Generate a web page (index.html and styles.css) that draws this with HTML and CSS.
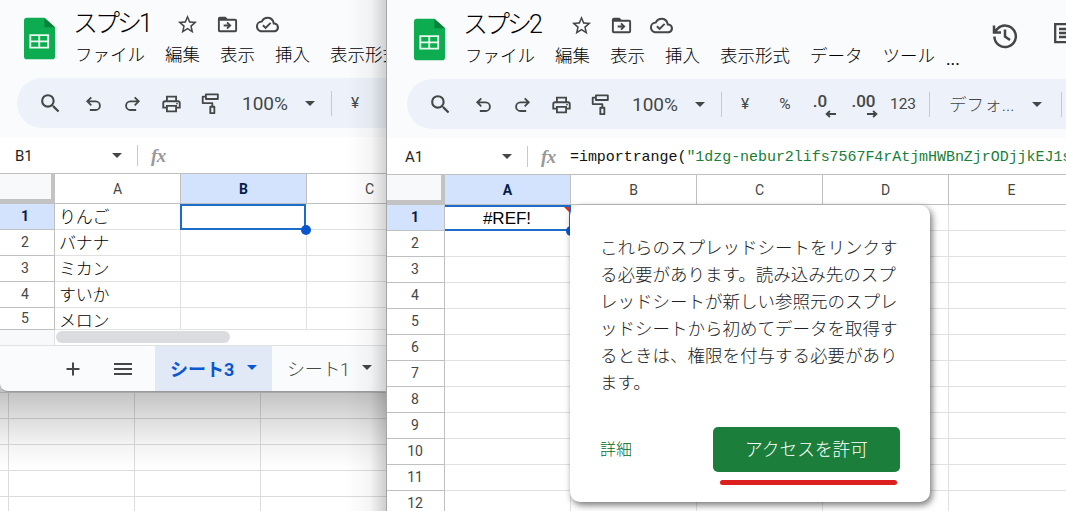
FILE: index.html
```
<!DOCTYPE html>
<html lang="ja">
<head>
  <meta charset="UTF-8">
  <meta name="viewport" content="width=device-width, initial-scale=1.0">
  <title>IMPORTRANGE</title>
  <link rel="stylesheet" href="styles.css">
</head>
<body>
  <!-- icons -->
  <svg class="defs">
    <symbol id="logo" viewBox="0 0 32 43"><path d="M3 0h18l11 10v30a3 3 0 0 1-3 3H3a3 3 0 0 1-3-3V3a3 3 0 0 1 3-3z" fill="#0dac50"/><path d="M21 0l11 10H21z" fill="#08843a"/><path d="M6.500 18h18.500v13H6.500zM6.500 24.500H25M15.750 18v13" fill="none" stroke="#e9f8ee" stroke-width="1.900"/></symbol>
    <symbol id="star" viewBox="0 0 24 24"><path d="M22 9.240l-7.190-.62L12 2 9.190 8.630 2 9.240l5.460 4.730L5.820 21 12 17.270 18.180 21l-1.630-7.030L22 9.240zM12 15.400l-3.760 2.270 1-4.280-3.320-2.880 4.380-.38L12 6.100l1.710 4.040 4.380.38-3.320 2.880 1 4.280L12 15.400z"/></symbol>
    <symbol id="move" viewBox="0 0 24 24"><path d="M20 6h-8l-2-2H4a2 2 0 0 0-2 2v12a2 2 0 0 0 2 2h16a2 2 0 0 0 2-2V8a2 2 0 0 0-2-2zm0 12H4V8h16v10zm-7.800-1l4-4-4-4-1.400 1.400 1.600 1.600H8v2h4.400l-1.600 1.600z"/></symbol>
    <symbol id="cloud" viewBox="0 0 24 24"><path d="M19.350 10.040A7.490 7.490 0 0 0 12 4C9.110 4 6.600 5.640 5.350 8.040A5.990 5.990 0 0 0 0 14c0 3.310 2.690 6 6 6h13c2.760 0 5-2.240 5-5 0-2.640-2.050-4.780-4.650-4.960zM19 18H6a4 4 0 0 1-.430-7.970l1.070-.11.500-.95A5.470 5.470 0 0 1 12 6c2.620 0 4.880 1.860 5.390 4.430l.3 1.500 1.530.11A3 3 0 0 1 19 18zm-9-3.820l-2.090-2.090L6.500 13.500 10 17l6.010-6.010-1.410-1.410z"/></symbol>
    <symbol id="search" viewBox="0 0 24 24"><path d="M15.500 14h-.79l-.28-.27A6.470 6.470 0 0 0 16 9.500 6.500 6.500 0 1 0 9.500 16c1.610 0 3.090-.59 4.230-1.570l.27.28v.79l5 4.990L20.490 19l-4.990-5zm-6 0a4.500 4.500 0 1 1 0-9 4.500 4.500 0 0 1 0 9z"/></symbol>
    <symbol id="undo" viewBox="0 0 24 24"><path d="M8 19.500v-2h6.300a3.700 3.700 0 0 0 0-7.400H7.600l2.700 2.700L8.900 14.200 3.800 9.100 8.900 4l1.400 1.400-2.700 2.700h6.700a5.700 5.700 0 0 1 0 11.400z"/></symbol>
    <symbol id="redo" viewBox="0 0 24 24"><path d="M16 19.500v-2H9.700a3.700 3.700 0 0 1 0-7.400h6.700l-2.700 2.700 1.400 1.400 5.100-5.100L15.100 4l-1.400 1.400 2.700 2.700H9.700a5.700 5.700 0 0 0 0 11.400z"/></symbol>
    <symbol id="print" viewBox="0 0 24 24"><path d="M19 8h-1V3H6v5H5a3 3 0 0 0-3 3v6h4v4h12v-4h4v-6a3 3 0 0 0-3-3zM8 5h8v3H8zm8 14H8v-4h8zm2-4v-2H6v2H4v-4a1 1 0 0 1 1-1h14a1 1 0 0 1 1 1v4z"/><circle cx="18" cy="11.500" r="1"/></symbol>
    <symbol id="paint" viewBox="0 0 20 24"><path d="M5 1.500h13v5H5zM5 4H1.500v7H12v4M9.800 15h4.400v7H9.800z" fill="none" stroke="#444746" stroke-width="2" stroke-linejoin="round"/></symbol>
    <symbol id="arrow-left" viewBox="0 0 10 7"><path d="M10 3.500H2M4.500.8L1.500 3.500l3 2.700" fill="none" stroke="#444746" stroke-width="1.700"/></symbol>
    <symbol id="arrow-right" viewBox="0 0 10 7"><path d="M0 3.500h8M5.500.8l3 2.700-3 2.700" fill="none" stroke="#444746" stroke-width="1.700"/></symbol>
    <symbol id="history" viewBox="0 0 26 26"><path d="M2.400 13.500A10.700 10.700 0 1 0 5.300 6L2.500 8.700M2 2.500v7h7M13 6.500v7l5 3.600" fill="none" stroke="#444746" stroke-width="2.500"/></symbol>
    <symbol id="comment" viewBox="0 0 22 22"><path d="M1.200 1.200h19v18h-19zM5 6h12M5 10h12M5 14h12" fill="none" stroke="#444746" stroke-width="2.300"/></symbol>
  </svg>

  <div class="desktop">
    <div class="backdrop"></div>

    <!-- スプシ1 -->
    <div class="window source">
      <div class="header">
        <svg class="logo"><use href="#logo"/></svg>
        <div class="heading">
          <div class="title-row">
            <span class="title">スプシ1</span>
            <svg class="title-icon"><use href="#star"/></svg>
            <svg class="title-icon"><use href="#move"/></svg>
            <svg class="title-icon"><use href="#cloud"/></svg>
          </div>
          <div class="menu"><span>ファイル</span><span>編集</span><span>表示</span><span>挿入</span><span>表示形式</span></div>
        </div>
      </div>
      <div class="toolbar">
        <svg class="tool search"><use href="#search"/></svg>
        <svg class="tool"><use href="#undo"/></svg>
        <svg class="tool"><use href="#redo"/></svg>
        <svg class="tool"><use href="#print"/></svg>
        <svg class="tool"><use href="#paint"/></svg>
        <span class="zoom">100%</span><i class="caret"></i>
        <i class="divider"></i>
        <span class="format yen">¥</span>
      </div>
      <div class="formula-bar">
        <span class="name-box">B1</span><i class="caret"></i><i class="divider"></i><span class="fx">fx</span>
      </div>
      <div class="sheet">
        <div class="corner"></div><div class="col">A</div><div class="col active">B</div><div class="col">C</div>
        <div class="row active">1</div><div class="cell">りんご</div><div class="cell selected"></div><div class="cell"></div>
        <div class="row">2</div><div class="cell">バナナ</div><div class="cell"></div><div class="cell"></div>
        <div class="row">3</div><div class="cell">ミカン</div><div class="cell"></div><div class="cell"></div>
        <div class="row">4</div><div class="cell">すいか</div><div class="cell"></div><div class="cell"></div>
        <div class="row">5</div><div class="cell">メロン</div><div class="cell"></div><div class="cell"></div>
      </div>
      <div class="scroll"><div class="thumb"></div></div>
      <div class="tabs">
        <svg class="add" viewBox="0 0 14 14"><path d="M7 .5v13M.5 7h13" stroke="#444746" stroke-width="2"/></svg>
        <svg class="list" viewBox="0 0 18 12"><path d="M0 1h18M0 6h18M0 11h18" stroke="#444746" stroke-width="2"/></svg>
        <div class="tab current">シート3<i class="caret"></i></div>
        <div class="tab">シート1<i class="caret"></i></div>
      </div>
    </div>

    <!-- スプシ2 -->
    <div class="window target">
      <div class="header">
        <svg class="logo"><use href="#logo"/></svg>
        <div class="heading">
          <div class="title-row">
            <span class="title">スプシ2</span>
            <svg class="title-icon"><use href="#star"/></svg>
            <svg class="title-icon"><use href="#move"/></svg>
            <svg class="title-icon"><use href="#cloud"/></svg>
          </div>
          <div class="menu"><span>ファイル</span><span>編集</span><span>表示</span><span>挿入</span><span>表示形式</span><span>データ</span><span>ツール</span><span class="more">...</span></div>
        </div>
        <svg class="history"><use href="#history"/></svg>
        <svg class="comment"><use href="#comment"/></svg>
      </div>
      <div class="toolbar">
        <svg class="tool search"><use href="#search"/></svg>
        <svg class="tool"><use href="#undo"/></svg>
        <svg class="tool"><use href="#redo"/></svg>
        <svg class="tool"><use href="#print"/></svg>
        <svg class="tool"><use href="#paint"/></svg>
        <span class="zoom">100%</span><i class="caret"></i>
        <i class="divider"></i>
        <span class="format yen">¥</span>
        <span class="format">%</span>
        <span class="format decimal less">.0<svg><use href="#arrow-left"/></svg></span>
        <span class="format decimal">.00<svg><use href="#arrow-right"/></svg></span>
        <span class="format">123</span>
        <i class="divider"></i>
        <span class="font">デフォ...</span><i class="caret"></i>
        <i class="divider last"></i>
      </div>
      <div class="formula-bar">
        <span class="name-box">A1</span><i class="caret"></i><i class="divider"></i><span class="fx">fx</span>
        <span class="formula">=importrange(<b>"1dzg-nebur2lifs7567F4rAtjmHWBnZjrODjjkEJ1s</b></span>
      </div>
      <div class="sheet">
        <div class="corner"></div><div class="col active">A</div><div class="col">B</div><div class="col">C</div><div class="col">D</div><div class="col">E</div>
        <div class="row active">1</div><div class="cell selected error">#REF!</div><div class="cell"></div><div class="cell"></div><div class="cell"></div><div class="cell"></div>
        <div class="row">2</div><div class="cell"></div><div class="cell"></div><div class="cell"></div><div class="cell"></div><div class="cell"></div>
        <div class="row">3</div><div class="cell"></div><div class="cell"></div><div class="cell"></div><div class="cell"></div><div class="cell"></div>
        <div class="row">4</div><div class="cell"></div><div class="cell"></div><div class="cell"></div><div class="cell"></div><div class="cell"></div>
        <div class="row">5</div><div class="cell"></div><div class="cell"></div><div class="cell"></div><div class="cell"></div><div class="cell"></div>
        <div class="row">6</div><div class="cell"></div><div class="cell"></div><div class="cell"></div><div class="cell"></div><div class="cell"></div>
        <div class="row">7</div><div class="cell"></div><div class="cell"></div><div class="cell"></div><div class="cell"></div><div class="cell"></div>
        <div class="row">8</div><div class="cell"></div><div class="cell"></div><div class="cell"></div><div class="cell"></div><div class="cell"></div>
        <div class="row">9</div><div class="cell"></div><div class="cell"></div><div class="cell"></div><div class="cell"></div><div class="cell"></div>
        <div class="row">10</div><div class="cell"></div><div class="cell"></div><div class="cell"></div><div class="cell"></div><div class="cell"></div>
        <div class="row">11</div><div class="cell"></div><div class="cell"></div><div class="cell"></div><div class="cell"></div><div class="cell"></div>
        <div class="row">12</div><div class="cell"></div><div class="cell"></div><div class="cell"></div><div class="cell"></div><div class="cell"></div>
      </div>

      <div class="dialog">
        <p>これらのスプレッドシートをリンクす<br>る必要があります。読み込み先のスプ<br>レッドシートが新しい参照元のスプレ<br>ッドシートから初めてデータを取得す<br>るときは、権限を付与する必要があり<br>ます。</p>
        <div class="actions">
          <a class="details">詳細</a>
          <button class="allow">アクセスを許可</button>
        </div>
        <div class="underline"></div>
      </div>
    </div>
  </div>
</body>
</html>
```
FILE: styles.css
```
* {
  box-sizing: border-box;
}

body {
  margin: 0;
  overflow: hidden;
  font-family: Roboto, "Noto Sans CJK JP", sans-serif;
  color: #444746;
}

svg {
  display: block;
  flex: none;
  fill: #444746;
}

.defs {
  position: absolute;
  width: 0;
  height: 0;
}

.desktop {
  position: relative;
  width: 1066px;
  height: 511px;
  overflow: hidden;
  background: #fff;
}

/* sheet behind both windows */
.backdrop {
  position: absolute;
  top: 383px;
  left: 0;
  width: 387px;
  height: 128px;
  background:
    linear-gradient(90deg, transparent 345px, rgba(0, 0, 0, .04) 370px, rgba(0, 0, 0, .2)),
    linear-gradient(rgba(0, 0, 0, .24) 8px, rgba(0, 0, 0, .14) 34px, rgba(0, 0, 0, .05) 60px, transparent 86px),
    repeating-linear-gradient(90deg, transparent 0 8px, #dcdcdc 8px 9px, transparent 9px 126px),
    repeating-linear-gradient(transparent 0 9px, #dcdcdc 9px 10px, transparent 10px 26px),
    #fff;
}

.window {
  position: absolute;
  top: 0;
  display: flex;
  flex-direction: column;
  overflow: hidden;
  background: #f9fbfd;
}

.source {
  left: 0;
  width: 387px;
  height: 392px;
  border-bottom: 1px solid #999;
  border-radius: 0 0 0 8px;
}

/* shade cast by the window in front */
.source::after {
  content: "";
  position: absolute;
  top: 0;
  right: 0;
  width: 40px;
  height: 100%;
  background: linear-gradient(90deg, transparent, rgba(0, 0, 0, .04) 60%, rgba(0, 0, 0, .18));
}

.target {
  left: 386px;
  width: 680px;
  height: 511px;
  border-left: 1px solid #a5a5a5;
}

.header {
  display: flex;
  flex: none;
  height: 78px;
  padding-left: 24px;
}

.target .header {
  height: 79px;
  padding: 1px 0 0 27px;
}

.logo {
  width: 31px;
  height: 43px;
  margin-top: 17px;
}

.heading {
  flex: none;
  margin-left: 19px;
}

.title-row {
  display: flex;
  align-items: center;
  height: 46px;
}

.title {
  width: 103px;
  margin-left: -1px;
  padding-top: 1px;
  font: 300 25px/40px Roboto, "Noto Sans CJK JP", sans-serif;
  letter-spacing: -3px;
  color: #000;
}

.target .title {
  width: 107px;
}

.title-icon {
  width: 23px;
  height: 23px;
  margin: 3px 17px 0 0;
}

.menu {
  display: flex;
  gap: 20px;
  height: 20px;
  padding-left: 1px;
  font-size: 17.5px;
  font-weight: 300;
  line-height: 18px;
  white-space: nowrap;
  color: #000;
}

.menu .more {
  margin-left: -9px;
  padding-top: 3px;
  font-weight: 400;
}

.history {
  width: 26px;
  height: 26px;
  margin: 22px 0 0 32px;
}

.comment {
  width: 22px;
  height: 22px;
  margin: 22px 0 0 36px;
}

.toolbar {
  display: flex;
  flex: none;
  align-items: center;
  width: 760px;
  height: 50px;
  margin-left: 17px;
  padding-left: 14px;
  border-radius: 25px;
  background: #edf2fa;
}

.target .toolbar {
  margin-left: 20px;
}

.tool {
  width: 39px;
  height: 22px;
  margin-top: 1px;
}

.tool.search {
  height: 25px;
  margin: 0 4px 0 0;
}

.zoom {
  width: 63px;
  margin-left: 12px;
  padding-top: 1px;
  font-size: 19px;
}

.caret {
  flex: none;
  width: 0;
  border: 5px solid transparent;
  border-top-color: currentColor;
  border-bottom: 0;
}

.divider {
  flex: none;
  width: 1px;
  height: 25px;
  background: #c7c9cc;
}

.toolbar .divider {
  margin-left: 16px;
}

.format {
  flex: none;
  width: 40px;
  font-size: 15.5px;
  text-align: center;
}

.format.yen {
  margin-left: 3px;
}

.decimal {
  position: relative;
  width: 39px;
  padding-bottom: 6px;
  font-size: 17px;
  font-weight: 500;
  line-height: 26px;
}

.decimal svg {
  position: absolute;
  right: 5px;
  bottom: 2px;
  width: 11px;
  height: 8px;
}

.decimal.less {
  padding-right: 9px;
}

.decimal.less svg {
  right: 8px;
}

.toolbar .format + .divider {
  margin-left: 6px;
}

.font {
  width: 83px;
  margin: -2px 0 0 19px;
  font-size: 17.6px;
  font-weight: 300;
}

.toolbar .divider.last {
  margin-left: 19px;
}

.formula-bar {
  display: flex;
  flex: none;
  align-items: center;
  height: 37px;
  margin-top: 9px;
  padding-left: 15px;
  border-bottom: 1px solid #c0c0c0;
  background: #fff;
}

.source .formula-bar {
  width: 387px;
}

.target .formula-bar {
  padding-left: 18px;
}

.name-box {
  flex: none;
  width: 97px;
  padding-top: 1px;
  font-size: 15px;
  color: #1f1f1f;
}

.formula-bar .divider {
  height: 21px;
  margin: 0 13px 0 15px;
}

.fx {
  flex: none;
  width: 29px;
  padding-top: 1px;
  font: italic bold 19px/20px "Liberation Serif", serif;
  letter-spacing: -.5px;
  color: #999;
}

.formula {
  flex: none;
  padding-top: 2px;
  font: 15px "Liberation Mono", monospace;
  letter-spacing: -.05px;
  white-space: nowrap;
  color: #111;
}

.formula b {
  font-weight: normal;
  color: #188038;
}

.sheet {
  display: grid;
  flex: none;
  grid-template-columns: 55px repeat(3, 126px);
  grid-template-rows: 30px repeat(4, 26px) 22px;
  background: #fff;
}

.target .sheet {
  grid-template-columns: 58px repeat(5, 126px);
  grid-template-rows: 30px repeat(12, 26px);
}

.corner {
  border: solid #c3c3c3;
  border-width: 0 4px 5px 0;
  background: #f8f9fa;
}

.col,
.row {
  display: flex;
  align-items: center;
  justify-content: center;
  border-right: 1px solid #c0c0c0;
  border-bottom: 1px solid #c0c0c0;
  font-size: 14px;
  background: #fff;
}

.row {
  padding: 0 4px 1px 0;
  overflow: hidden;
}

.target .row {
  padding: 0 1px 2px 0;
}

.col.active,
.row.active {
  font-weight: bold;
  color: #041e49;
  background: #d3e3fd;
}

.cell {
  padding: 1px 0 0 4px;
  border-right: 1px solid #e1e1e1;
  border-bottom: 1px solid #e1e1e1;
  overflow: hidden;
  font-size: 17px;
  font-weight: 300;
  line-height: 25px;
  letter-spacing: -.2px;
  color: #000;
}

.cell.selected {
  position: relative;
  margin: 0 1px 0 -1px;
  border: 2px solid #1b6dc9;
  overflow: visible;
}

.cell.selected::after {
  content: "";
  position: absolute;
  right: -7px;
  bottom: -7px;
  width: 10px;
  height: 10px;
  border-radius: 50%;
  background: #0b57d0;
}

.cell.error {
  margin: 0;
  padding: 0;
  border-left: 0;
  font-family: "Liberation Sans", sans-serif;
  line-height: 23px;
  letter-spacing: 0;
  text-align: center;
}

.cell.error::before {
  content: "";
  position: absolute;
  top: 0;
  right: 0;
  border: solid transparent;
  border-width: 0 5px 5px 0;
  border-right-color: #d93025;
}

.scroll {
  flex: none;
  height: 16px;
  padding: 1px 0 0 56px;
  border-bottom: 1px solid #e1e1e1;
  background: linear-gradient(90deg, #f8f9fa 54px, #e1e1e1 54px 55px, #fff 55px);
}

.thumb {
  width: 174px;
  height: 12px;
  border-radius: 6px;
  background: #dadce0;
}

.tabs {
  display: flex;
  flex: 1;
  align-items: center;
}

.add {
  width: 14px;
  height: 14px;
  margin-left: 66px;
}

.list {
  width: 18px;
  height: 12px;
  margin: 0 32px 0 34px;
}

.tab {
  display: flex;
  flex: none;
  align-items: center;
  justify-content: space-between;
  width: 117px;
  height: 100%;
  margin-left: -9px;
  padding: 0 15px 2px;
  font-size: 18px;
  font-weight: 300;
}

.tab + .tab {
  margin-left: 0;
  padding-right: 17px;
  letter-spacing: -.3px;
}

.tab.current {
  font-weight: bold;
  color: #0b57d0;
  background: #e1e9f7;
}

.dialog {
  position: absolute;
  top: 205px;
  left: 183px;
  width: 360px;
  height: 297px;
  padding: 28px 30px 0;
  border-radius: 10px;
  background: #fff;
  box-shadow: 2px 3px 7px rgba(0, 0, 0, .55);
}

.dialog p {
  margin: 0;
  font: 300 17.5px/27px "Noto Sans CJK JP", sans-serif;
  white-space: nowrap;
  color: #202124;
}

.actions {
  display: flex;
  align-items: center;
  justify-content: space-between;
  margin-top: 32px;
}

.details {
  padding-bottom: 4px;
  font-size: 16px;
  font-weight: 300;
  color: #006b25;
}

.allow {
  width: 187px;
  height: 45px;
  padding: 0 0 4px;
  border: 0;
  border-radius: 5px;
  font: 300 17.7px "Noto Sans CJK JP", sans-serif;
  color: #fff;
  background: #1b7f3b;
}

.underline {
  width: 177px;
  height: 5px;
  margin: 8px 0 0 120px;
  border-radius: 3px;
  background: #dc1f1f;
}
```
